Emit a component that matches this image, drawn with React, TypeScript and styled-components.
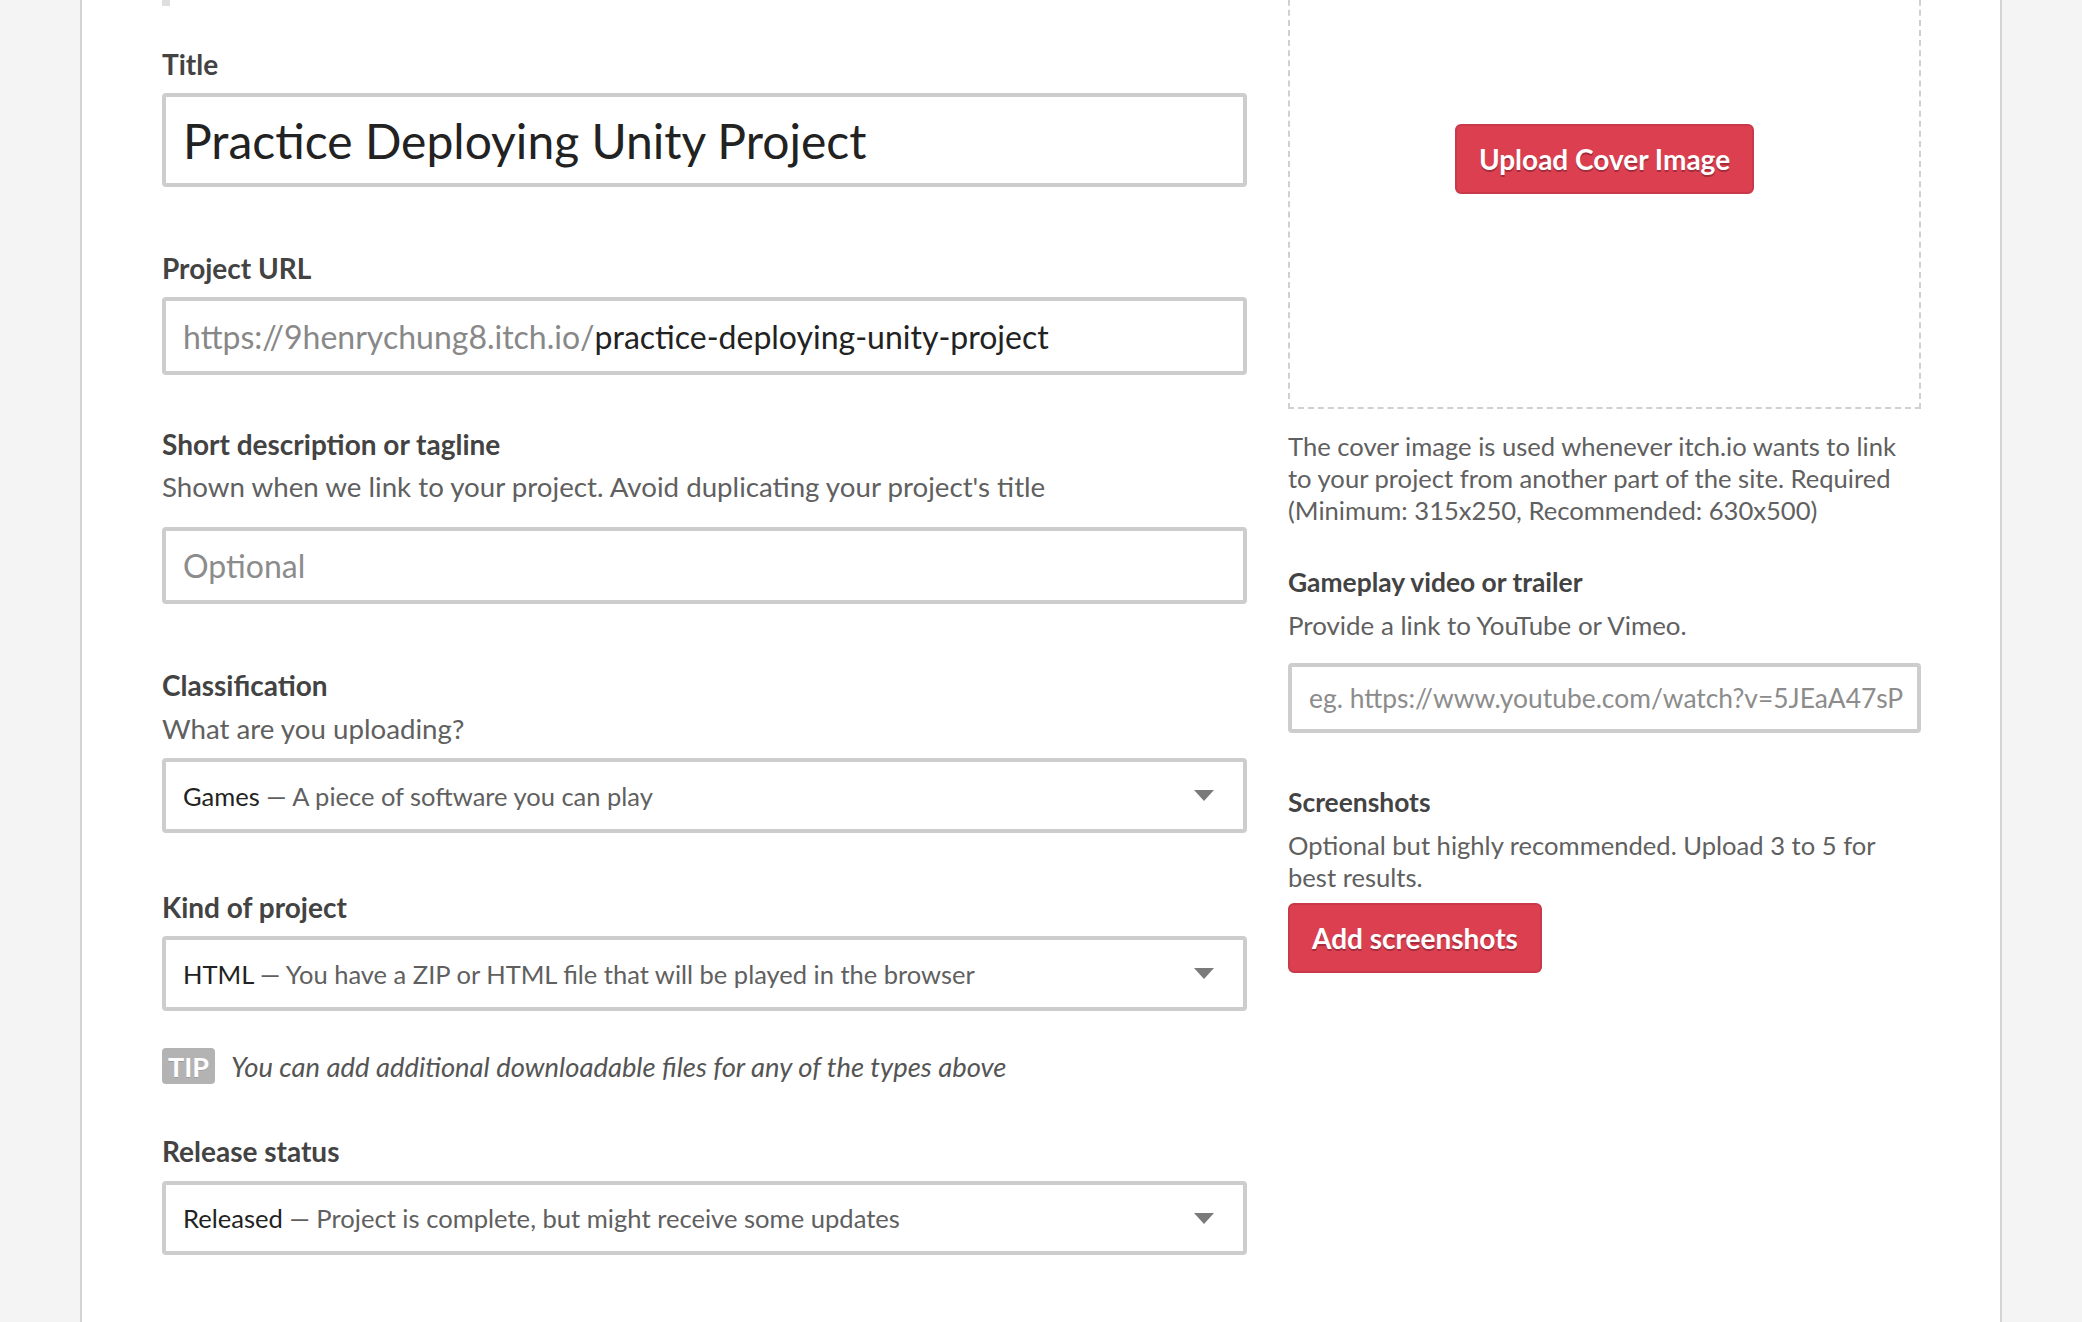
import React from "react";
import styled, { createGlobalStyle } from "styled-components";

const GlobalStyle = createGlobalStyle`
  html, body {
    margin: 0;
    padding: 0;
    background: #f4f4f4;
    font-family: Lato, "Open Sans", "Liberation Sans", sans-serif;
    color: #434343;
    overflow: hidden;
  }
  * { box-sizing: border-box; }
`;

const Panel = styled.div`
  width: 1922px;
  margin: -96px auto 0;
  min-height: 1500px;
  background: #ffffff;
  border-left: 2px solid #d3d3d3;
  border-right: 2px solid #d3d3d3;
  padding: 0 79px 0 80px;
  display: flex;
  gap: 41px;
`;

const LeftCol = styled.div`
  flex: 1;
  display: flex;
  flex-direction: column;
  min-width: 0;
`;

const RightCol = styled.div`
  width: 633px;
  flex: none;
  display: flex;
  flex-direction: column;
`;

const TopMarker = styled.div`
  width: 8px;
  height: 102px;
  background: #dedede;
`;

const Label = styled.div<{ $mt?: number; $size?: number }>`
  margin-top: ${(p) => p.$mt ?? 0}px;
  font-size: ${(p) => p.$size ?? 28}px;
  line-height: 36px;
  font-weight: 700;
  color: #434343;
`;

const Sub = styled.div<{ $mt?: number; $size?: number }>`
  margin-top: ${(p) => p.$mt ?? 0}px;
  font-size: ${(p) => p.$size ?? 27.7}px;
  line-height: 32px;
  color: #606060;
`;

const InputBox = styled.div<{ $mt?: number; $h: number; $size: number }>`
  margin-top: ${(p) => p.$mt ?? 0}px;
  height: ${(p) => p.$h}px;
  border: 4px solid #cdcdcd;
  border-radius: 4px;
  background: #fff;
  padding: 0 17px;
  display: flex;
  align-items: center;
  font-size: ${(p) => p.$size}px;
  color: #222;
  white-space: nowrap;
  overflow: hidden;
`;

const Muted = styled.span`
  color: #888888;
`;

const Placeholder = styled.span`
  color: #8c8c8c;
  min-width: 0;
  overflow: hidden;
`;

const VideoInput = styled(InputBox)`
  padding: 0 14px 0 17px;
`;

const SelectBox = styled(InputBox)`
  justify-content: space-between;
  padding-right: 29px;
`;

const SelectValue = styled.span`
  color: #222;
`;

const SelectDesc = styled.span`
  color: #606060;
`;

const Arrow = () => (
  <svg width="20" height="11" viewBox="0 0 20 11">
    <polygon points="0,0 20,0 10,11" fill="#7a7a7a" />
  </svg>
);

const TipRow = styled.div<{ $mt?: number }>`
  margin-top: ${(p) => p.$mt ?? 0}px;
  display: flex;
  align-items: center;
  gap: 16px;
  height: 36px;
`;

const TipBadge = styled.span`
  width: 53px;
  height: 36px;
  border-radius: 4px;
  background: #b3b3b3;
  color: #fff;
  font-weight: 700;
  font-size: 27px;
  text-shadow: 0 1px 0 rgba(0, 0, 0, 0.12);
  display: flex;
  align-items: center;
  justify-content: center;
`;

const TipText = styled.span`
  font-style: italic;
  font-size: 27.4px;
  color: #555;
`;

const CoverBox = styled.div`
  margin-top: 5px;
  height: 500px;
  border: 2px dashed #d0d0d0;
  display: flex;
  align-items: center;
  justify-content: center;
`;

const RedButton = styled.button<{ $mt?: number }>`
  margin-top: ${(p) => p.$mt ?? 0}px;
  align-self: flex-start;
  height: 70px;
  padding: 0 22px;
  background: #db3f50;
  border: 2px solid #c8394a;
  border-radius: 6px;
  color: #fff;
  font-family: Lato, "Open Sans", sans-serif;
  font-weight: 700;
  font-size: 28px;
  text-shadow: 0 2px 0 #a32d3b;
  cursor: pointer;
`;

const CenterButton = styled(RedButton)`
  align-self: center;
`;

export default function App() {
  return (
    <>
      <GlobalStyle />
      <Panel>
        <LeftCol>
          <TopMarker />
          <Label $mt={40}>Title</Label>
          <InputBox $mt={11} $h={94} $size={48}>
            Practice Deploying Unity Project
          </InputBox>

          <Label $mt={63}>Project URL</Label>
          <InputBox $mt={11} $h={78} $size={32}>
            <Muted>https://9henrychung8.itch.io/</Muted>practice-deploying-unity-project
          </InputBox>

          <Label $mt={51}>Short description or tagline</Label>
          <Sub $mt={9}>
            Shown when we link to your project. Avoid duplicating your project's title
          </Sub>
          <InputBox $mt={24} $h={77} $size={32}>
            <Placeholder>Optional</Placeholder>
          </InputBox>

          <Label $mt={63}>Classification</Label>
          <Sub $mt={10}>What are you uploading?</Sub>
          <SelectBox $mt={13} $h={75} $size={25.5}>
            <span>
              <SelectValue>Games</SelectValue>
              <SelectDesc> — A piece of software you can play</SelectDesc>
            </span>
            <Arrow />
          </SelectBox>

          <Label $mt={56}>Kind of project</Label>
          <SelectBox $mt={11} $h={75} $size={25.5}>
            <span>
              <SelectValue>HTML</SelectValue>
              <SelectDesc>
                {" "}
                — You have a ZIP or HTML file that will be played in the browser
              </SelectDesc>
            </span>
            <Arrow />
          </SelectBox>

          <TipRow $mt={37}>
            <TipBadge>TIP</TipBadge>
            <TipText>You can add additional downloadable files for any of the types above</TipText>
          </TipRow>

          <Label $mt={49}>Release status</Label>
          <SelectBox $mt={12} $h={74} $size={25.6}>
            <span>
              <SelectValue>Released</SelectValue>
              <SelectDesc> — Project is complete, but might receive some updates</SelectDesc>
            </span>
            <Arrow />
          </SelectBox>
        </LeftCol>

        <RightCol>
          <CoverBox>
            <CenterButton>Upload Cover Image</CenterButton>
          </CoverBox>
          <Sub $mt={21} $size={25.6}>
            The cover image is used whenever itch.io wants to link to your project from another
            part of the site. Required (Minimum: 315x250, Recommended: 630x500)
          </Sub>

          <Label $mt={38} $size={26.4}>
            Gameplay video or trailer
          </Label>
          <Sub $mt={9} $size={25.9}>
            Provide a link to YouTube or Vimeo.
          </Sub>
          <VideoInput $mt={22} $h={70} $size={26.4}>
            <Placeholder>eg. https://www.youtube.com/watch?v=5JEaA47sPHk</Placeholder>
          </VideoInput>

          <Label $mt={51} $size={26.4}>
            Screenshots
          </Label>
          <Sub $mt={9} $size={25.6}>
            Optional but highly recommended. Upload 3 to 5 for best results.
          </Sub>
          <RedButton $mt={10}>Add screenshots</RedButton>
        </RightCol>
      </Panel>
    </>
  );
}
